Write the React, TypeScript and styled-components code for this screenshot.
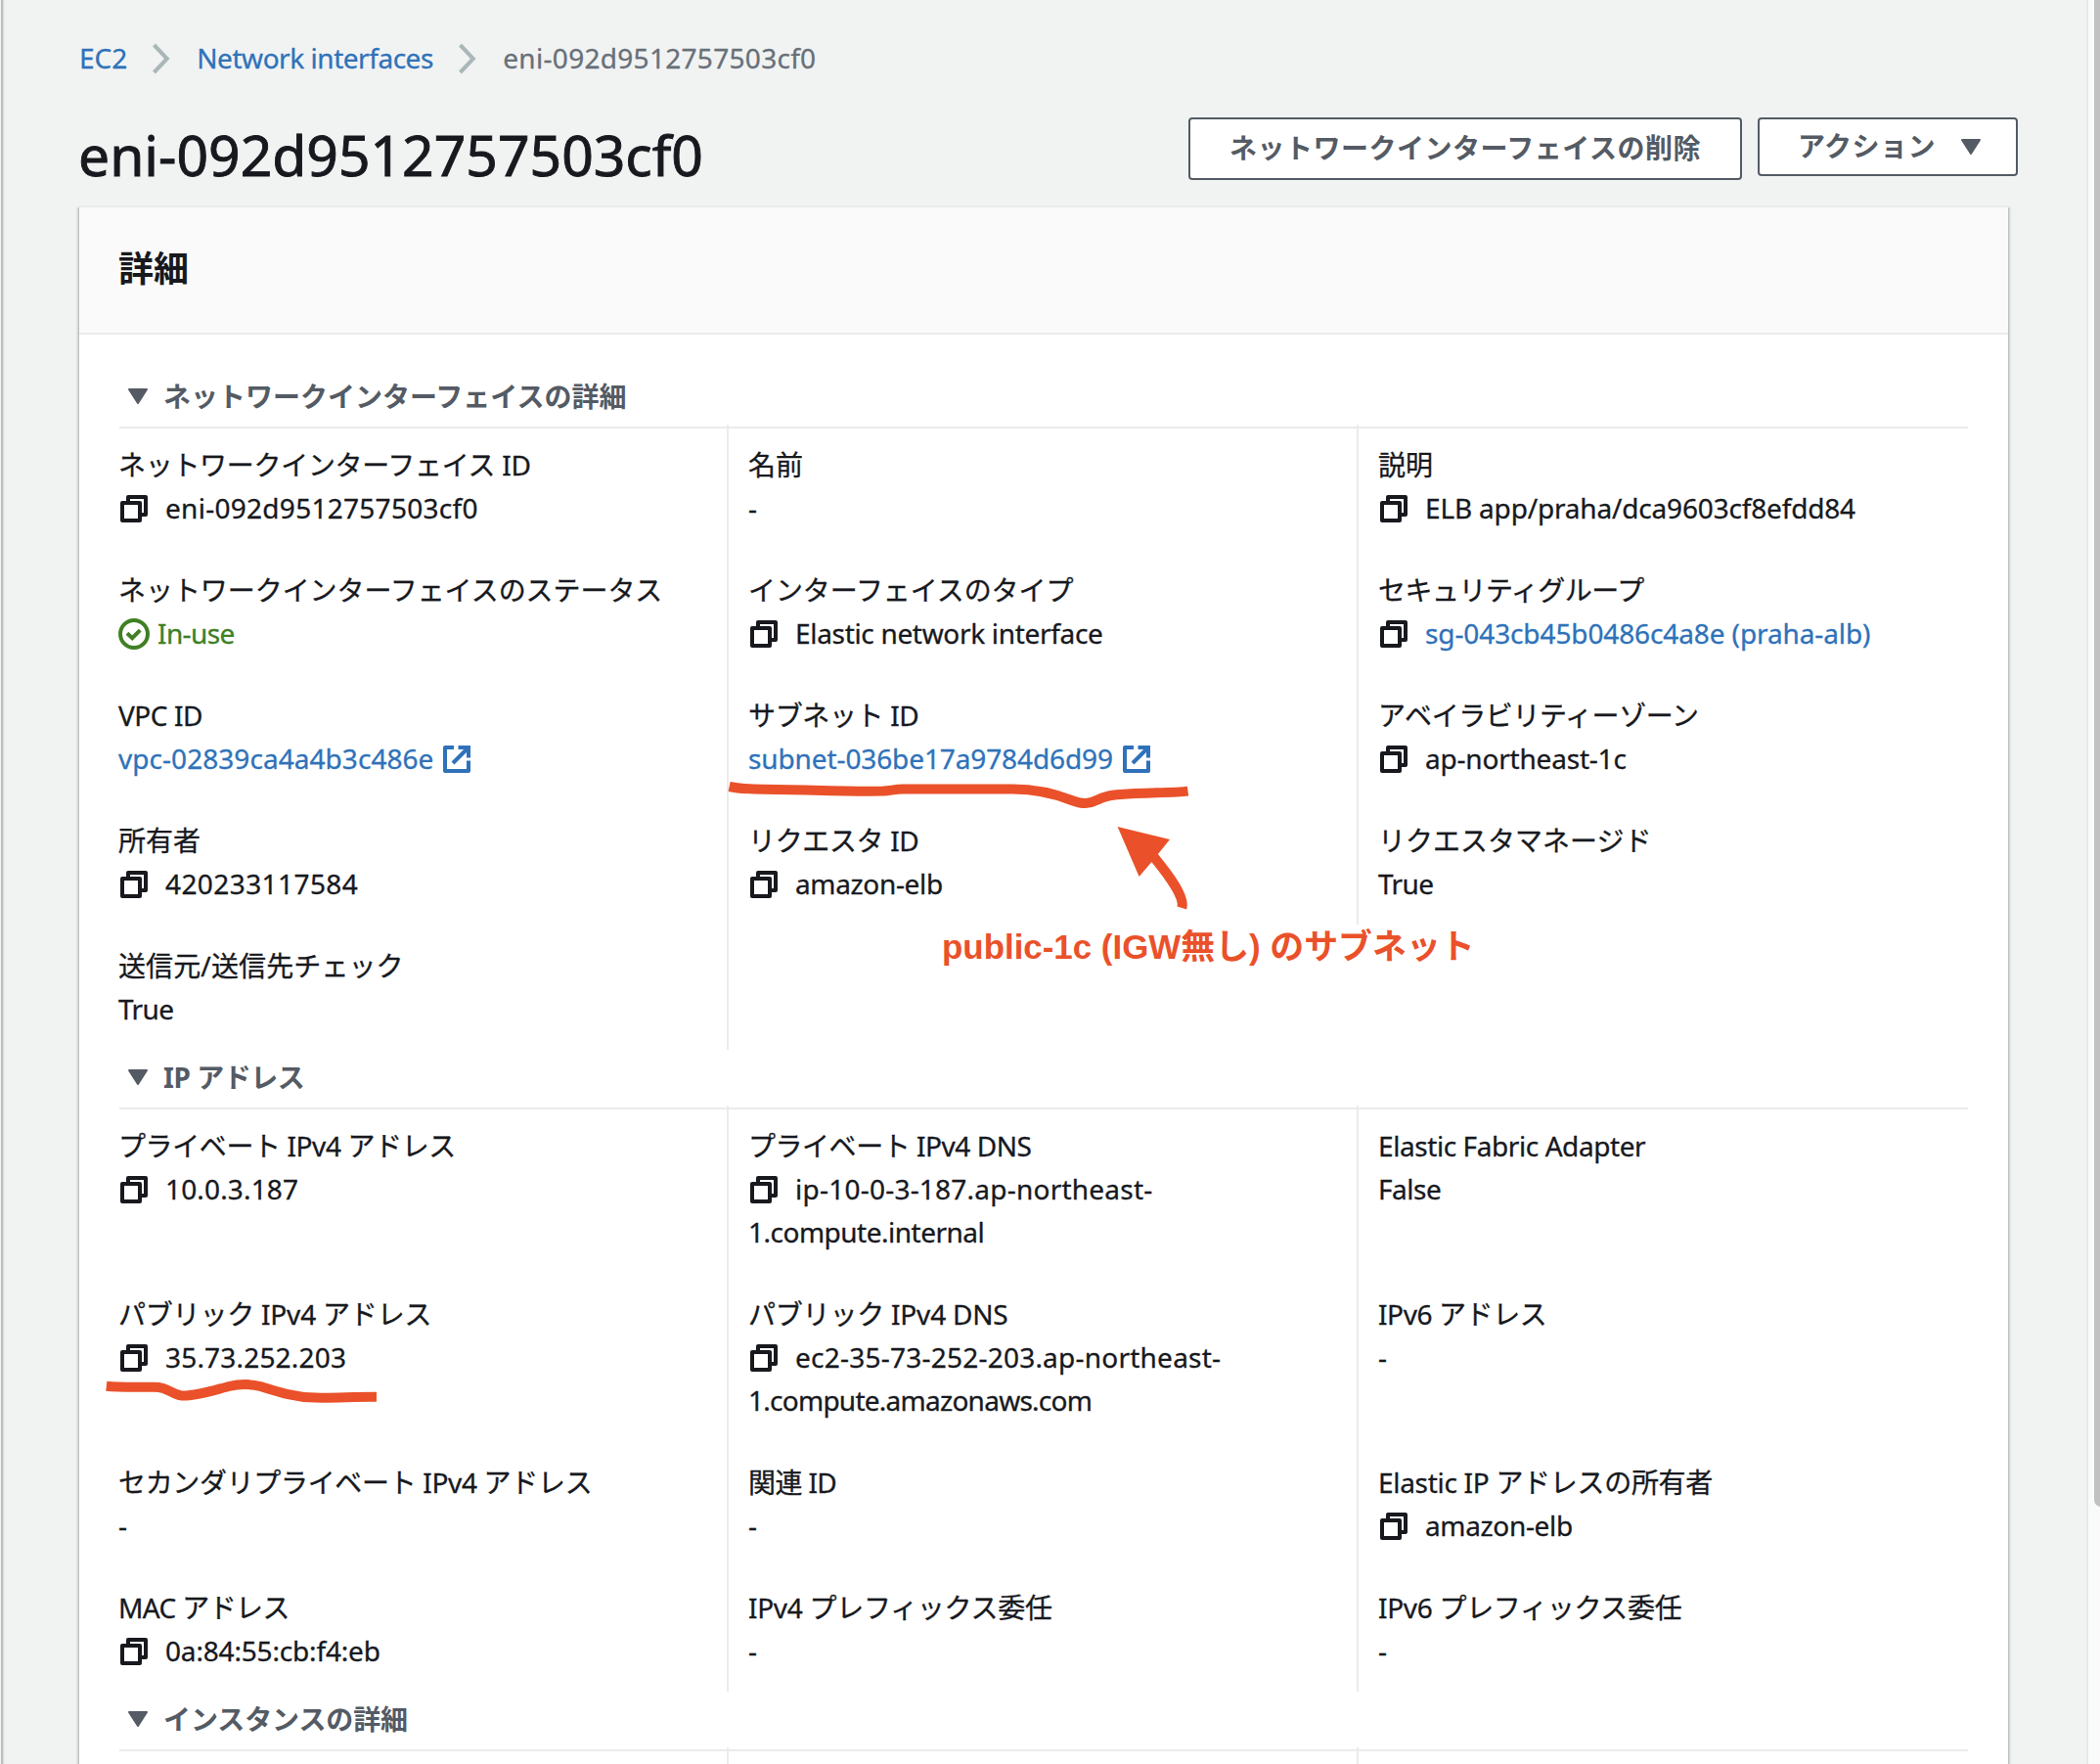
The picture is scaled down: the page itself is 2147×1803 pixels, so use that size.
import React from "react";
import styled, { createGlobalStyle } from "styled-components";

const color = {
  page: "#f1f3f3",
  text: "#17191e",
  muted: "#687078",
  heading: "#545b64",
  link: "#2f72b9",
  success: "#3f8024",
  line: "#eaebeb",
  chevron: "#aab7b8",
  mark: "#ea512a",
};

const GlobalStyle = createGlobalStyle`
  * { box-sizing: border-box; }
  body {
    margin: 0;
    background: ${color.page};
    color: ${color.text};
    font: 400 28px/44px "Noto Sans", "Noto Sans CJK JP", sans-serif;
    overflow: hidden;
  }
  h1, h2, h3, dl, dt, dd, ol { margin: 0; padding: 0; }
  svg { display: block; flex: none; }
`;

const Window = styled.div`
  position: relative;
  display: flex;
  width: 2147px;
  height: 1803px;
  overflow: hidden;
  background: ${color.page};
`;

const PanelEdge = styled.div`
  flex: none;
  width: 3px;
  border-left: 1px solid ${color.page};
  background: #bbc1c2;
  box-shadow: 1px 0 1px rgba(0, 28, 36, 0.12);
`;

const Main = styled.main`
  flex: 1;
  min-width: 0;
  padding: 37px 70px 0 78px;
`;

const ScrollTrack = styled.div`
  flex: none;
  width: 14px;
  padding-left: 6px;
  border-left: 2px solid #e8e8e8;
  background: #fafafa;
  overflow: hidden;
`;

const ScrollThumb = styled.div`
  width: 14px;
  height: 1540px;
  border-radius: 0 0 7px 7px;
  background: #c1c1c1;
`;

const Breadcrumbs = styled.ol`
  display: flex;
  align-items: center;
  height: 44px;
  list-style: none;
  white-space: nowrap;
  -webkit-text-stroke: 0.3px;
`;

const Crumb = styled.li<{ $link?: boolean; $width?: number }>`
  width: ${(p) => (p.$width ? `${p.$width}px` : "auto")};
  color: ${(p) => (p.$link ? color.link : color.muted)};
`;

const CrumbChevron = styled.svg`
  width: 20px;
  height: 32px;
  margin: 2px 26px 0 25px;
`;

const Spaced = styled.span<{ $ls: number }>`
  letter-spacing: ${(p) => p.$ls}px;
`;

const PageHeader = styled.header`
  display: flex;
  justify-content: space-between;
  align-items: flex-start;
  height: 90px;
  margin-top: 39px;
`;

const PageTitle = styled.h1`
  margin-left: -1px;
  padding-top: 3px;
  font-size: 57px;
  font-weight: 400;
  line-height: 70px;
  white-space: nowrap;
  -webkit-text-stroke: 0.9px;
`;

const Actions = styled.div`
  display: flex;
  align-items: flex-start;
  gap: 16px;
`;

const Button = styled.button<{ $width: number; $height: number; $indent?: number }>`
  display: flex;
  align-items: center;
  justify-content: center;
  gap: 25px;
  width: ${(p) => p.$width}px;
  height: ${(p) => p.$height}px;
  padding: 0 0 3px ${(p) => p.$indent ?? 0}px;
  border: 2px solid ${color.heading};
  border-radius: 4px;
  background: #fff;
  color: ${color.heading};
  font: 700 28px/40px "Noto Sans", "Noto Sans CJK JP", sans-serif;
  letter-spacing: 0.5px;
  white-space: nowrap;
`;

const Card = styled.section`
  width: 1972px;
  min-height: 1700px;
  border-top: 2px solid ${color.line};
  background: #fff;
  box-shadow: 0 2px 2px rgba(0, 28, 36, 0.3), 2px 2px 2px rgba(0, 28, 36, 0.15),
    -2px 2px 2px rgba(0, 28, 36, 0.15);
`;

const CardHeader = styled.div`
  display: flex;
  align-items: center;
  height: 130px;
  padding: 0 40px 2px;
  border-bottom: 2px solid ${color.line};
  background: #fafafa;
`;

const CardTitle = styled.h2`
  font-size: 36px;
  font-weight: 700;
  line-height: 44px;
`;

const CardBody = styled.div`
  padding: 35px 40px 0;
`;

const SectionHead = styled.h3`
  display: flex;
  align-items: center;
  gap: 15px;
  height: 61px;
  margin: 0 1px;
  padding: 0 0 4px 8px;
  border-bottom: 2px solid ${color.line};
  color: ${color.heading};
  font-size: 28px;
  font-weight: 700;
  line-height: 44px;
  white-space: nowrap;
`;

const Columns = styled.div`
  display: grid;
  grid-template-columns: repeat(3, 624px);
  column-gap: 20px;
  align-items: start;
  margin-top: -4px;
`;

const Column = styled.dl<{ $divided: boolean }>`
  display: flex;
  flex-direction: column;
  gap: 40px;
  padding: 19px 0 20px;
  border-right: 2px solid ${(p) => (p.$divided ? color.line : "transparent")};
  -webkit-text-stroke: 0.3px;
`;

const Item = styled.div<{ $tall?: boolean }>`
  height: ${(p) => (p.$tall ? 132 : 88)}px;
`;

const Label = styled.dt`
  height: 44px;
  white-space: nowrap;
`;

const Line = styled.dd<{ $tone?: Tone; $gap: number }>`
  display: flex;
  align-items: center;
  gap: ${(p) => p.$gap}px;
  height: 44px;
  white-space: nowrap;
  color: ${(p) =>
    p.$tone === "link" ? color.link : p.$tone === "success" ? color.success : color.text};

  svg {
    margin-top: 2px;
  }
`;

const AnnotationLayer = styled.div`
  position: absolute;
  inset: 0;
  pointer-events: none;
`;

const AnnotationText = styled.div`
  position: absolute;
  left: 963px;
  top: 944px;
  color: ${color.mark};
  font: 700 34.9px/48px "Liberation Sans", "Noto Sans CJK JP", sans-serif;
  white-space: nowrap;
`;

type Tone = "link" | "success";
type IconName = "copy" | "check";
type Text = [string, number?];

interface Field {
  label: Text;
  value: Text;
  more?: Text;
  icon?: IconName;
  tone?: Tone;
  external?: boolean;
}

interface SectionData {
  title: Text;
  columns: Field[][];
  tallRows: number[];
}

const CopyIcon = () => (
  <svg width="32" height="32" viewBox="0 0 32 32" fill="none" stroke={color.text} strokeWidth="4" strokeLinejoin="round">
    <rect x="4" y="10" width="18" height="18" />
    <path d="M10 9V4H28V22H23" />
  </svg>
);

const CheckIcon = () => (
  <svg width="32" height="32" viewBox="0 0 32 32" fill="none" stroke={color.success} strokeWidth="4">
    <circle cx="16" cy="16" r="14" />
    <path d="M9 15.2l5.2 5 8-8" />
  </svg>
);

const ExternalIcon = () => (
  <svg width="32" height="32" viewBox="0 0 32 32" fill="none" stroke={color.link} strokeWidth="4">
    <path d="M13 4H4V28H28V17.5" strokeLinejoin="round" />
    <path d="M17.5 4H28V14.5" />
    <path d="M27 5L12 20" />
  </svg>
);

const Caret = ({ dy = 0 }: { dy?: number }) => (
  <svg width="22" height="18" viewBox={`0 ${-dy} 22 18`} fill={color.heading} stroke={color.heading} strokeWidth="2" strokeLinejoin="round">
    <path d="M2 2H20L11 16Z" />
  </svg>
);

const Chevron = () => (
  <CrumbChevron viewBox="0 0 20 32" fill="none" stroke={color.chevron} strokeWidth="4">
    <path d="M2.5 2L15.8 16L2.5 30" />
  </CrumbChevron>
);

const sections: SectionData[] = [
  {
    title: ["ネットワークインターフェイスの詳細"],
    tallRows: [],
    columns: [
      [
        { label: ["ネットワークインターフェイス ID", -0.3], value: ["eni-092d9512757503cf0", 0.28], icon: "copy" },
        { label: ["ネットワークインターフェイスのステータス", -0.06], value: ["In-use", -0.6], icon: "check", tone: "success" },
        { label: ["VPC ID", -0.45], value: ["vpc-02839ca4a4b3c486e", 0.05], tone: "link", external: true },
        { label: ["所有者"], value: ["420233117584", 0.42], icon: "copy" },
        { label: ["送信元/送信先チェック", 0.12], value: ["True", -0.6] },
      ],
      [
        { label: ["名前"], value: ["-"] },
        { label: ["インターフェイスのタイプ", -0.1], value: ["Elastic network interface", -0.32], icon: "copy" },
        { label: ["サブネット ID", -0.35], value: ["subnet-036be17a9784d6d99", -0.11], tone: "link", external: true },
        { label: ["リクエスタ ID", -0.35], value: ["amazon-elb", -0.35], icon: "copy" },
      ],
      [
        { label: ["説明"], value: ["ELB app/praha/dca9603cf8efdd84", -0.17], icon: "copy" },
        { label: ["セキュリティグループ", -0.5], value: ["sg-043cb45b0486c4a8e (praha-alb)", -0.11], icon: "copy", tone: "link" },
        { label: ["アベイラビリティーゾーン", -0.4], value: ["ap-northeast-1c", -0.2], icon: "copy" },
        { label: ["リクエスタマネージド"], value: ["True", -0.6] },
      ],
    ],
  },
  {
    title: ["IP アドレス", -0.45],
    tallRows: [0, 1],
    columns: [
      [
        { label: ["プライベート IPv4 アドレス", -0.4], value: ["10.0.3.187", 0.15], icon: "copy" },
        { label: ["パブリック IPv4 アドレス", -0.2], value: ["35.73.252.203", 0.19], icon: "copy" },
        { label: ["セカンダリプライベート IPv4 アドレス", -0.33], value: ["-"] },
        { label: ["MAC アドレス", -0.6], value: ["0a:84:55:cb:f4:eb", -0.17], icon: "copy" },
      ],
      [
        { label: ["プライベート IPv4 DNS", -0.46], value: ["ip-10-0-3-187.ap-northeast-", 0.23], more: ["1.compute.internal", -0.5], icon: "copy" },
        { label: ["パブリック IPv4 DNS", -0.2], value: ["ec2-35-73-252-203.ap-northeast-", 0.23], more: ["1.compute.amazonaws.com", -0.74], icon: "copy" },
        { label: ["関連 ID", -0.6], value: ["-"] },
        { label: ["IPv4 プレフィックス委任", -0.28], value: ["-"] },
      ],
      [
        { label: ["Elastic Fabric Adapter", -0.42], value: ["False", -0.5] },
        { label: ["IPv6 アドレス", -0.4], value: ["-"] },
        { label: ["Elastic IP アドレスの所有者", -0.3], value: ["amazon-elb", -0.35], icon: "copy" },
        { label: ["IPv6 プレフィックス委任", -0.3], value: ["-"] },
      ],
    ],
  },
  { title: ["インスタンスの詳細", -0.1], tallRows: [], columns: [[], [], []] },
];

const T = ({ text }: { text: Text }) => <Spaced $ls={text[1] ?? 0}>{text[0]}</Spaced>;

const FieldView = ({ field, tall }: { field: Field; tall: boolean }) => (
  <Item $tall={tall}>
    <Label>
      <T text={field.label} />
    </Label>
    <Line $tone={field.tone} $gap={field.icon === "copy" ? 16 : 8}>
      {field.icon === "copy" && <CopyIcon />}
      {field.icon === "check" && <CheckIcon />}
      <T text={field.value} />
      {field.external && <ExternalIcon />}
    </Line>
    {field.more && (
      <Line $gap={0}>
        <T text={field.more} />
      </Line>
    )}
  </Item>
);

const Section = ({ data }: { data: SectionData }) => (
  <section>
    <SectionHead>
      <Caret />
      <T text={data.title} />
    </SectionHead>
    <Columns>
      {data.columns.map((fields, c) => (
        <Column key={c} $divided={c < 2}>
          {fields.map((f, r) => (
            <FieldView key={r} field={f} tall={data.tallRows.includes(r)} />
          ))}
        </Column>
      ))}
    </Columns>
  </section>
);

const Annotations = () => (
  <AnnotationLayer>
    <svg width="2147" height="1803" viewBox="0 0 2147 1803" fill="none" stroke={color.mark} strokeWidth="10" strokeLinejoin="round">
      <path d="M745.6 804C757 806.3 764 806.6 780 806.8C820 807 870 809.5 903 808.6C911 808 915 806.6 924 806.5H1035C1060 806.5 1081 812 1097 818.5C1107 822 1113 822 1121 818C1129 814 1134 812.8 1146 812C1170 810 1200 810.5 1214.5 808.6" />
      <path d="M108.8 1416.8C122 1418.3 135 1417.8 155 1417.8C172 1417 174 1425 186 1426.6C202 1427 222 1420 234 1417C245 1414.5 258 1415 266 1417C282 1422 300 1428 322 1428.6C345 1429 360 1427.6 385 1427.8" />
      <path d="M1179 875C1192 891 1212 916 1208.3 928" />
      <path d="M1142.6 845L1196 858L1183.5 873.5L1177 881.5L1164.6 896Z" fill={color.mark} stroke="none" />
    </svg>
    <AnnotationText>public-1c (IGW無し) のサブネット</AnnotationText>
  </AnnotationLayer>
);

export default function App() {
  return (
    <>
      <GlobalStyle />
      <Window>
        <PanelEdge />
        <Main>
          <Breadcrumbs>
            <Crumb $link>EC2</Crumb>
            <Chevron />
            <Crumb $link $width={242}>
              <Spaced $ls={-0.46}>Network interfaces</Spaced>
            </Crumb>
            <Chevron />
            <Crumb>
              <Spaced $ls={0.3}>eni-092d9512757503cf0</Spaced>
            </Crumb>
          </Breadcrumbs>
          <PageHeader>
            <PageTitle>eni-092d9512757503cf0</PageTitle>
            <Actions>
              <Button $width={566} $height={64}>
                ネットワークインターフェイスの削除
              </Button>
              <Button $width={266} $height={60} $indent={4}>
                アクション
                <Caret dy={1} />
              </Button>
            </Actions>
          </PageHeader>
          <Card>
            <CardHeader>
              <CardTitle>詳細</CardTitle>
            </CardHeader>
            <CardBody>
              {sections.map((s) => (
                <Section key={s.title[0]} data={s} />
              ))}
            </CardBody>
          </Card>
        </Main>
        <ScrollTrack>
          <ScrollThumb />
        </ScrollTrack>
        <Annotations />
      </Window>
    </>
  );
}
